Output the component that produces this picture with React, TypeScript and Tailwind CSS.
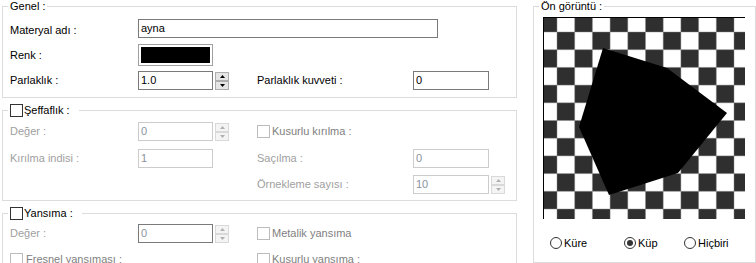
import React from "react";

const CELL = 17.7;

const TextBox = ({
  value,
  w = "w-[75px]",
  disabled = false,
  dark = false,
}: {
  value: string;
  w?: string;
  disabled?: boolean;
  dark?: boolean;
}) => (
  <div
    className={`h-[19px] ${w} shrink-0 border bg-white pl-[2px] flex items-center leading-none ${
      disabled && !dark ? "border-[#cccccc]" : "border-[#7a7a7a]"
    } ${disabled ? "text-[#8a929c]" : "text-black"}`}
  >
    {value}
  </div>
);

const Arrow = ({ up, disabled }: { up: boolean; disabled: boolean }) => (
  <svg width="5" height="3" viewBox="0 0 5 3">
    <path d={up ? "M2.5 0 L5 3 L0 3Z" : "M0 0 L5 0 L2.5 3Z"} fill={disabled ? "#b0b0b0" : "#000"} />
  </svg>
);

const Spin = ({ disabled = false }: { disabled?: boolean }) => (
  <div className="ml-[2px] w-[14px] h-[18px] flex flex-col shrink-0">
    <div
      className={`flex-1 border flex items-center justify-center ${
        disabled ? "border-[#d9d9d9] bg-[#f4f4f4]" : "border-[#adadad] bg-[#e5e5e5]"
      }`}
    >
      <Arrow up disabled={disabled} />
    </div>
    <div
      className={`flex-1 border flex items-center justify-center ${
        disabled ? "border-[#d9d9d9] bg-[#f4f4f4]" : "border-[#adadad] bg-[#e5e5e5]"
      }`}
    >
      <Arrow up={false} disabled={disabled} />
    </div>
  </div>
);

const Check = ({ disabled = false }: { disabled?: boolean }) => (
  <span
    className={`block w-[13px] h-[13px] border bg-white shrink-0 ${
      disabled ? "border-[#bcbcbc]" : "border-[#333333]"
    }`}
  />
);

const Radio = ({ checked = false }: { checked?: boolean }) => (
  <span className="w-[12px] h-[12px] rounded-full border border-[#333333] bg-white flex items-center justify-center shrink-0">
    {checked && <span className="w-[6px] h-[6px] rounded-full bg-[#333333]" />}
  </span>
);

const Board = () => {
  const cells: React.ReactNode[] = [];
  for (let j = 0; j < 13; j++) {
    for (let i = 0; i < 13; i++) {
      if ((i + j) % 2 === 0) {
        cells.push(
          <rect
            key={`${i}-${j}`}
            x={-4.7 + i * CELL}
            y={-3.7 + j * CELL}
            width={CELL}
            height={CELL}
            fill="#2f2f2f"
          />
        );
      }
    }
  }
  const lines: React.ReactNode[] = [];
  for (let k = 1; k < 13; k++) {
    const p = -4.7 + k * CELL;
    const q = -3.7 + k * CELL;
    lines.push(<line key={`v${k}`} x1={p} y1={0} x2={p} y2={201} stroke="#8c8c8c" strokeWidth="1" opacity="0.45" />);
    lines.push(<line key={`h${k}`} x1={0} y1={q} x2={201} y2={q} stroke="#8c8c8c" strokeWidth="1" opacity="0.45" />);
  }
  return (
    <div className="w-[202px] h-[202px] border-l border-t border-black">
      <svg width="201" height="201" viewBox="0 0 201 201" className="block">
        <rect width="201" height="201" fill="#fff" />
        {cells}
        {lines}
        <polygon points="59,30 123,50 183,95 134,155 65,177 35,109" fill="#000" />
      </svg>
    </div>
  );
};

export default function App() {
  return (
    <div className="w-[756px] h-[263px] overflow-hidden bg-white flex gap-[16px] pl-[2px] text-[11px] text-black font-['Liberation_Sans',Arial,sans-serif]">
      <div className="w-[515px] shrink-0 flex flex-col">
        {/* Genel */}
        <fieldset className="border border-[#dcdcdc] w-[515px] h-[98px] shrink-0">
          <legend className="ml-[5px] px-[2px] leading-[12px]">Genel :</legend>
          <div className="pl-[7px] pt-[7px] flex flex-col">
            <div className="h-[19px] flex items-center">
              <span className="w-[128px] shrink-0 pt-[3px]">Materyal adı :</span>
              <TextBox value="ayna" w="w-[300px]" />
            </div>
            <div className="mt-[6px] h-[22px] flex items-center">
              <span className="w-[128px] shrink-0">Renk :</span>
              <div className="w-[75px] h-[22px] border border-[#a0a0a0] bg-white p-[2px]">
                <div className="w-full h-full bg-black" />
              </div>
            </div>
            <div className="mt-[5px] h-[19px] flex items-center">
              <div className="w-[247px] shrink-0 flex items-center">
                <span className="w-[128px] shrink-0">Parlaklık :</span>
                <TextBox value="1.0" />
                <Spin />
              </div>
              <span className="w-[156px] shrink-0">Parlaklık kuvveti :</span>
              <TextBox value="0" w="w-[76px]" />
            </div>
          </div>
        </fieldset>

        {/* Şeffaflık */}
        <fieldset className="mt-[5px] border border-[#dcdcdc] w-[515px] h-[98px] shrink-0">
          <legend className="ml-[5px] pl-[2px] pr-[9px]">
            <span className="flex items-center h-[14px] gap-[1px] leading-none">
              <Check />
              <span>Şeffaflık :</span>
            </span>
          </legend>
          <div className="pl-[7px] pt-[5px] flex flex-col text-[#a0a0a0]">
            <div className="h-[19px] flex items-center">
              <div className="w-[247px] shrink-0 flex items-center">
                <span className="w-[128px] shrink-0">Değer :</span>
                <TextBox value="0" disabled />
                <Spin disabled />
              </div>
              <span className="flex items-center gap-[2px] text-[#808080]">
                <Check disabled />
                <span>Kusurlu kırılma :</span>
              </span>
            </div>
            <div className="mt-[8px] h-[19px] flex items-center">
              <div className="w-[247px] shrink-0 flex items-center">
                <span className="w-[128px] shrink-0">Kırılma indisi :</span>
                <TextBox value="1" disabled />
              </div>
              <span className="w-[156px] shrink-0">Saçılma :</span>
              <TextBox value="0" w="w-[76px]" disabled />
            </div>
            <div className="mt-[7px] h-[19px] flex items-center">
              <div className="w-[247px] shrink-0" />
              <span className="w-[156px] shrink-0">Örnekleme sayısı :</span>
              <TextBox value="10" w="w-[76px]" disabled />
              <Spin disabled />
            </div>
          </div>
        </fieldset>

        {/* Yansıma */}
        <fieldset className="mt-[5px] border border-[#dcdcdc] w-[515px] h-[100px] shrink-0">
          <legend className="ml-[5px] pl-[2px] pr-[9px]">
            <span className="flex items-center h-[14px] gap-[1px] leading-none">
              <Check />
              <span>Yansıma :</span>
            </span>
          </legend>
          <div className="pl-[7px] pt-[4px] flex flex-col text-[#a0a0a0]">
            <div className="h-[19px] flex items-center">
              <div className="w-[247px] shrink-0 flex items-center">
                <span className="w-[128px] shrink-0">Değer :</span>
                <TextBox value="0" disabled dark />
                <Spin disabled />
              </div>
              <span className="flex items-center gap-[2px] text-[#808080]">
                <Check disabled />
                <span>Metalik yansıma</span>
              </span>
            </div>
            <div className="mt-[9px] h-[14px] flex items-center text-[#808080]">
              <span className="w-[247px] shrink-0 flex items-center gap-[3px]">
                <Check disabled />
                <span>Fresnel yansıması :</span>
              </span>
              <span className="flex items-center gap-[2px]">
                <Check disabled />
                <span>Kusurlu yansıma :</span>
              </span>
            </div>
          </div>
        </fieldset>
      </div>

      {/* Ön görüntü */}
      <fieldset className="border border-[#dcdcdc] w-[223px] h-[263px] shrink-0">
        <legend className="ml-[5px] px-[2px] leading-[12px]">Ön görüntü :</legend>
        <div className="pl-[9px] pt-[5px] flex flex-col">
          <Board />
          <div className="mt-[18px] ml-[7px] h-[12px] flex items-center">
            <span className="w-[74px] flex items-center gap-[2px]">
              <Radio />
              <span>Küre</span>
            </span>
            <span className="w-[60px] flex items-center gap-[2px]">
              <Radio checked />
              <span>Küp</span>
            </span>
            <span className="flex items-center gap-[2px]">
              <Radio />
              <span>Hiçbiri</span>
            </span>
          </div>
        </div>
      </fieldset>
    </div>
  );
}
